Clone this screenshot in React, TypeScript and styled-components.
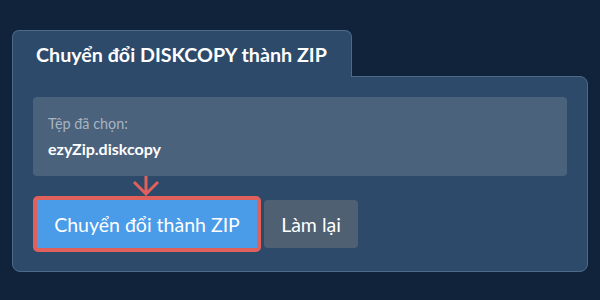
import React from 'react';
import styled, { createGlobalStyle } from 'styled-components';

const GlobalStyle = createGlobalStyle`
    html, body {
        margin: 0;
        padding: 0;
        background: #11233a;
        font-family: Lato, "Noto Sans", sans-serif;
    }
`;

const Page = styled.div`
    width: 600px;
    height: 300px;
    box-sizing: border-box;
    padding: 30px 12px 0 12px;
`;

const Tab = styled.div`
    position: relative;
    z-index: 1;
    width: 340px;
    height: 47px;
    box-sizing: border-box;
    margin-bottom: -1px;
    display: flex;
    align-items: center;
    padding-left: 23px;
    background: #2d4a6b;
    border: 1px solid #4d6a8b;
    border-bottom: none;
    border-radius: 7px 7px 0 0;
    color: #ffffff;
    font-size: 19.7px;
    font-weight: 700;
`;

const Panel = styled.div`
    position: relative;
    width: 576px;
    box-sizing: border-box;
    padding: 20px 20px 19px 20px;
    background: #2d4a6b;
    border: 1px solid #4d6a8b;
    border-radius: 0 8px 8px 8px;
`;

const FileBox = styled.div`
    height: 79px;
    box-sizing: border-box;
    padding: 18px 15px 0 15px;
    background: #4a627c;
    border-radius: 4px;
    display: flex;
    flex-direction: column;
    gap: 7px;
    line-height: 1.2;
`;

const FileLabel = styled.div`
    color: #a8b4c2;
    font-size: 14.4px;
`;

const FileName = styled.div`
    color: #ffffff;
    font-size: 16px;
    font-weight: 700;
`;

const Arrow = styled.svg`
    position: absolute;
    left: 118px;
    top: 99px;
`;

const Actions = styled.div`
    display: flex;
    align-items: center;
    gap: 3px;
    margin-top: 20px;
`;

const Highlight = styled.div`
    border: 4px solid #e0605c;
    border-radius: 5px;
    display: flex;
`;

const Button = styled.button<{ $variant: 'primary' | 'secondary' }>`
    height: 48px;
    border: none;
    margin: 0;
    font-family: Lato, "Noto Sans", sans-serif;
    font-size: 19.5px;
    color: #ffffff;
    cursor: pointer;
    white-space: nowrap;
    background: ${(p) => (p.$variant === 'primary' ? '#4a9be8' : '#4f6072')};
    border-radius: ${(p) => (p.$variant === 'primary' ? '0' : '4px')};
    padding: 0;
    width: ${(p) => (p.$variant === 'primary' ? '220px' : '94px')};
`;

export default function App() {
    return (
        <Page>
            <GlobalStyle />
            <Tab>Chuyển đổi DISKCOPY thành ZIP</Tab>
            <Panel>
                <FileBox>
                    <FileLabel>Tệp đã chọn:</FileLabel>
                    <FileName>ezyZip.diskcopy</FileName>
                </FileBox>
                <Arrow width="30" height="20" viewBox="0 0 30 20">
                    <path
                        d="M15 0 V17 M3 6 L15 18 L27 6"
                        fill="none"
                        stroke="#e0605c"
                        strokeWidth="3"
                    />
                </Arrow>
                <Actions>
                    <Highlight>
                        <Button $variant="primary">Chuyển đổi thành ZIP</Button>
                    </Highlight>
                    <Button $variant="secondary">Làm lại</Button>
                </Actions>
            </Panel>
        </Page>
    );
}
